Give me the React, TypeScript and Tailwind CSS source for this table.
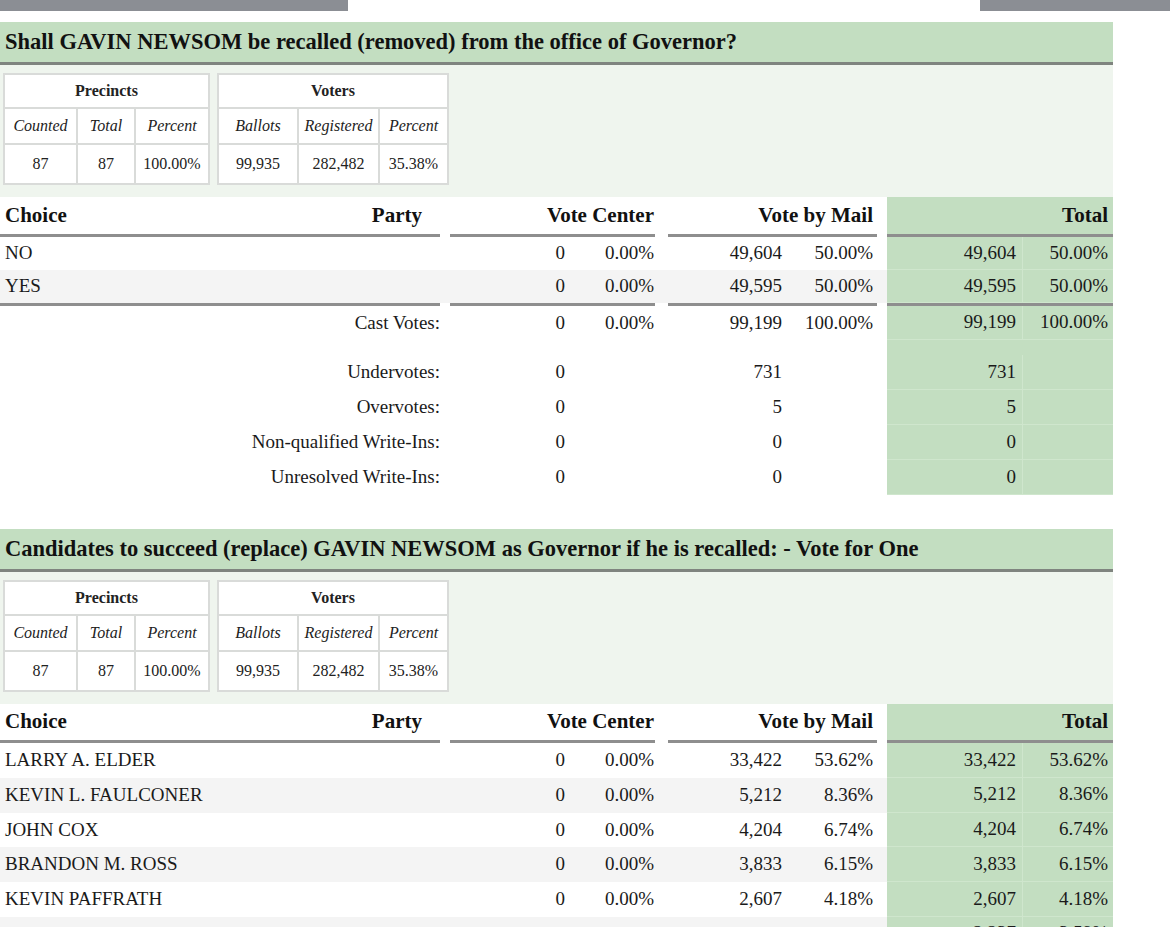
import React from "react"

type Choice = { name: string; vc: string; vcPct: string; vbm: string; vbmPct: string; total: string; totalPct: string }
type Summary = { label: string; vc: string; vbm: string; total: string }

const recallChoices: Choice[] = [
  { name: "NO", vc: "0", vcPct: "0.00%", vbm: "49,604", vbmPct: "50.00%", total: "49,604", totalPct: "50.00%" },
  { name: "YES", vc: "0", vcPct: "0.00%", vbm: "49,595", vbmPct: "50.00%", total: "49,595", totalPct: "50.00%" },
]

const recallSummary: Summary[] = [
  { label: "Undervotes:", vc: "0", vbm: "731", total: "731" },
  { label: "Overvotes:", vc: "0", vbm: "5", total: "5" },
  { label: "Non-qualified Write-Ins:", vc: "0", vbm: "0", total: "0" },
  { label: "Unresolved Write-Ins:", vc: "0", vbm: "0", total: "0" },
]

const candidates: Choice[] = [
  { name: "LARRY A. ELDER", vc: "0", vcPct: "0.00%", vbm: "33,422", vbmPct: "53.62%", total: "33,422", totalPct: "53.62%" },
  { name: "KEVIN L. FAULCONER", vc: "0", vcPct: "0.00%", vbm: "5,212", vbmPct: "8.36%", total: "5,212", totalPct: "8.36%" },
  { name: "JOHN COX", vc: "0", vcPct: "0.00%", vbm: "4,204", vbmPct: "6.74%", total: "4,204", totalPct: "6.74%" },
  { name: "BRANDON M. ROSS", vc: "0", vcPct: "0.00%", vbm: "3,833", vbmPct: "6.15%", total: "3,833", totalPct: "6.15%" },
  { name: "KEVIN PAFFRATH", vc: "0", vcPct: "0.00%", vbm: "2,607", vbmPct: "4.18%", total: "2,607", totalPct: "4.18%" },
  { name: "KEVIN KILEY", vc: "0", vcPct: "0.00%", vbm: "2,237", vbmPct: "3.59%", total: "2,237", totalPct: "3.59%" },
]

function ContestHeader({ title }: { title: string }) {
  return (
    <div className="flex h-[43px] items-center border-b-[3px] border-[#7f847f] bg-[#c3dec1] pl-[5px] text-[22.5px] font-bold text-[#111]">
      {title}
    </div>
  )
}

function StatsBox({ title, cols, widths }: { title: string; cols: string[][]; widths: string }) {
  return (
    <div className={`grid ${widths} grid-rows-[32px_34px_38px] gap-[2px] bg-[#d9dbd9] p-[2px] text-[16px] text-[#222]`}>
      <div className="col-span-3 flex items-center justify-center bg-white font-bold">{title}</div>
      {cols.map(([label]) => (
        <div key={label} className="flex items-center justify-center bg-white italic">{label}</div>
      ))}
      {cols.map(([label, value]) => (
        <div key={label + "v"} className="flex items-center justify-center bg-white">{value}</div>
      ))}
    </div>
  )
}

function Stats() {
  return (
    <div className="flex gap-[7px] bg-[#eff5ee] pb-[12px] pl-[3px] pt-[8px]">
      <StatsBox
        title="Precincts"
        widths="grid-cols-[71px_56px_72px]"
        cols={[["Counted", "87"], ["Total", "87"], ["Percent", "100.00%"]]}
      />
      <StatsBox
        title="Voters"
        widths="grid-cols-[78px_79px_67px]"
        cols={[["Ballots", "99,935"], ["Registered", "282,482"], ["Percent", "35.38%"]]}
      />
    </div>
  )
}

function Rule() {
  return (
    <div className="flex h-[3px] w-[1113px]">
      <div className="w-[440px] bg-[#8e8e8e]" />
      <div className="ml-[10px] w-[205px] bg-[#8e8e8e]" />
      <div className="ml-[13px] w-[209px] bg-[#8e8e8e]" />
      <div className="ml-[10px] w-[226px] bg-[#8e8e8e]" />
    </div>
  )
}

function HeaderRow({ h }: { h: string }) {
  return (
    <div className={`flex ${h} w-[1113px] items-center text-[21px] font-bold text-[#111]`}>
      <div className="flex w-[440px] pl-[5px]">
        <span className="flex-1">Choice</span>
        <span className="pr-[18px]">Party</span>
      </div>
      <div className="ml-[10px] w-[205px] pr-[1px] text-right">Vote Center</div>
      <div className="ml-[13px] w-[209px] pr-[4px] text-right">Vote by Mail</div>
      <div className="ml-[10px] flex h-full w-[226px] items-center justify-end bg-[#c3dec1] pr-[5px]">Total</div>
    </div>
  )
}

function ChoiceRow({ c, shaded, h }: { c: Choice; shaded: boolean; h: string }) {
  return (
    <div className={`flex ${h} w-[1113px] items-center ${shaded ? "bg-[#f4f4f4]" : "bg-white"}`}>
      <div className="w-[440px] pl-[5px]">{c.name}</div>
      <div className="ml-[10px] flex w-[205px]">
        <span className="w-[120px] pr-[5px] text-right">{c.vc}</span>
        <span className="w-[85px] pr-[1px] text-right">{c.vcPct}</span>
      </div>
      <div className="ml-[13px] flex w-[209px]">
        <span className="w-[118px] pr-[4px] text-right">{c.vbm}</span>
        <span className="w-[91px] pr-[4px] text-right">{c.vbmPct}</span>
      </div>
      <div className="ml-[10px] flex h-full w-[226px] bg-[#c3dec1]">
        <span className="flex w-[136px] items-center justify-end border-r border-b border-[#cfe6cd] pr-[6px]">{c.total}</span>
        <span className="flex w-[90px] items-center justify-end border-b border-[#cfe6cd] pr-[5px]">{c.totalPct}</span>
      </div>
    </div>
  )
}

function SummaryRow({ s }: { s: Summary }) {
  return (
    <div className="flex h-[35px] w-[1113px] items-center">
      <div className="w-[440px] text-right">{s.label}</div>
      <div className="ml-[10px] flex w-[205px]">
        <span className="w-[120px] pr-[5px] text-right">{s.vc}</span>
      </div>
      <div className="ml-[13px] flex w-[209px]">
        <span className="w-[118px] pr-[4px] text-right">{s.vbm}</span>
      </div>
      <div className="ml-[10px] flex h-full w-[226px] bg-[#c3dec1]">
        <span className="flex w-[136px] items-center justify-end border-r border-b border-[#cfe6cd] pr-[6px]">{s.total}</span>
        <span className="w-[90px] border-b border-[#cfe6cd]" />
      </div>
    </div>
  )
}

export default function App() {
  return (
    <div className="min-h-screen bg-white font-['Liberation_Serif',serif] text-[19px] text-[#1a1a1a]">
      {/* top nav stubs */}
      <div className="flex h-[11px] justify-between">
        <div className="w-[348px] bg-[#8b8e94]" />
        <div className="w-[190px] bg-[#8b8e94]" />
      </div>

      <div className="mt-[11px] w-[1113px]">
        <ContestHeader title="Shall GAVIN NEWSOM be recalled (removed) from the office of Governor?" />
        <Stats />
        <HeaderRow h="h-[37px]" />
        <Rule />
        {recallChoices.map((c, i) => (
          <ChoiceRow key={c.name} c={c} shaded={i % 2 === 1} h="h-[33px]" />
        ))}
        <Rule />
        <div className="flex h-[34px] w-[1113px] items-center">
          <div className="w-[440px] text-right">Cast Votes:</div>
          <div className="ml-[10px] flex w-[205px]">
            <span className="w-[120px] pr-[5px] text-right">0</span>
            <span className="w-[85px] pr-[1px] text-right">0.00%</span>
          </div>
          <div className="ml-[13px] flex w-[209px]">
            <span className="w-[118px] pr-[4px] text-right">99,199</span>
            <span className="w-[91px] pr-[4px] text-right">100.00%</span>
          </div>
          <div className="ml-[10px] flex h-full w-[226px] bg-[#c3dec1]">
            <span className="flex w-[136px] items-center justify-end border-r border-b border-[#cfe6cd] pr-[6px]">99,199</span>
            <span className="flex w-[90px] items-center justify-end border-b border-[#cfe6cd] pr-[5px]">100.00%</span>
          </div>
        </div>
        <div className="flex h-[15px] w-[1113px]">
          <div className="ml-[887px] w-[226px] bg-[#c3dec1]" />
        </div>
        {recallSummary.map((s) => (
          <SummaryRow key={s.label} s={s} />
        ))}

        <div className="mt-[34px]">
          <ContestHeader title="Candidates to succeed (replace) GAVIN NEWSOM as Governor if he is recalled: - Vote for One" />
          <Stats />
          <HeaderRow h="h-[36px]" />
          <Rule />
          {candidates.map((c, i) => (
            <ChoiceRow key={c.name} c={c} shaded={i % 2 === 1} h="h-[34.75px]" />
          ))}
        </div>
      </div>
    </div>
  )
}
